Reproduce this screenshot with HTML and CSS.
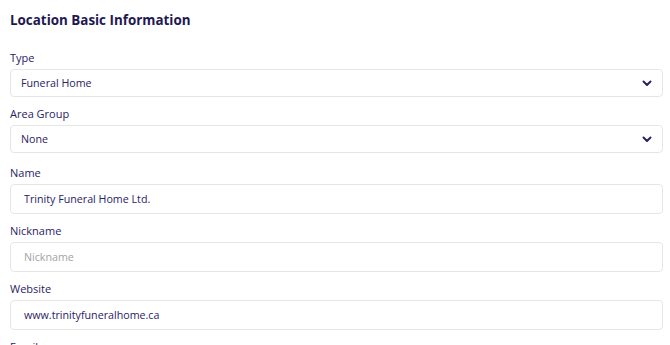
FILE: index.html
```html
<!DOCTYPE html>
<html lang="en">
<head>
  <meta charset="UTF-8" />
  <meta name="viewport" content="width=device-width, initial-scale=1.0"/>
  <title>Location Basic Information</title>
  <link rel="stylesheet" href="styles.css">
</head>
<body>

<div class="section">
  <h2 class="section-title">Location Basic Information</h2>

  <div class="field field-select">
    <label for="type">Type</label>
    <div class="select-wrap">
      <select id="type">
        <option>Funeral Home</option>
        <option>Cemetery</option>
        <option>Crematorium</option>
      </select>
      <svg class="chevron" width="10" height="7" viewBox="0 0 10 7">
        <path d="M1.5 1.5 L5 5 L8.5 1.5" fill="none" stroke="#2b2262" stroke-width="2" stroke-linecap="round" stroke-linejoin="round"/>
      </svg>
    </div>
  </div>

  <div class="field field-select field-last-select">
    <label for="area-group">Area Group</label>
    <div class="select-wrap">
      <select id="area-group">
        <option>None</option>
      </select>
      <svg class="chevron" width="10" height="7" viewBox="0 0 10 7">
        <path d="M1.5 1.5 L5 5 L8.5 1.5" fill="none" stroke="#2b2262" stroke-width="2" stroke-linecap="round" stroke-linejoin="round"/>
      </svg>
    </div>
  </div>

  <div class="field">
    <label for="name">Name</label>
    <input type="text" id="name" value="Trinity Funeral Home Ltd."/>
  </div>

  <div class="field">
    <label for="nickname">Nickname</label>
    <input type="text" id="nickname" placeholder="Nickname"/>
  </div>

  <div class="field">
    <label for="website">Website</label>
    <input type="text" id="website" value="www.trinityfuneralhome.ca"/>
  </div>

  <div class="field">
    <label for="email">Email</label>
    <input type="text" id="email" placeholder="Email"/>
  </div>
</div>

</body>
</html>
```

FILE: styles.css
```css
* {
  box-sizing: border-box;
}

body {
  margin: 0;
  padding: 10px 7px 0 10px;
  font-family: 'Open Sans', sans-serif;
  background: #fff;
  color: #2b2262;
}

.section-title {
  margin: 0 0 20px;
  font-size: 13.4px;
  line-height: 20px;
  font-weight: 700;
  color: #1f1850;
}

.field {
  margin-bottom: 9px;
}

.field-last-select {
  margin-bottom: 12px;
}

.field label {
  display: block;
  font-size: 11px;
  line-height: 16px;
  margin-bottom: 3px;
  color: #2b2262;
}

.select-wrap {
  position: relative;
}

.field select,
.field input {
  display: block;
  width: 100%;
  height: 30px;
  margin: 0;
  font-family: inherit;
  font-size: 10.7px;
  color: #2b2262;
  background: #fff;
  border: 1px solid #e6e6e6;
  border-radius: 4px;
  outline: none;
}

.field select {
  height: 28px;
  appearance: none;
  -webkit-appearance: none;
  padding: 0 30px 0 10px;
}

.field input {
  padding: 0 13px;
}

.field input::placeholder {
  color: #a3a3a3;
}

.chevron {
  position: absolute;
  right: 11px;
  top: 11px;
  pointer-events: none;
}
```
